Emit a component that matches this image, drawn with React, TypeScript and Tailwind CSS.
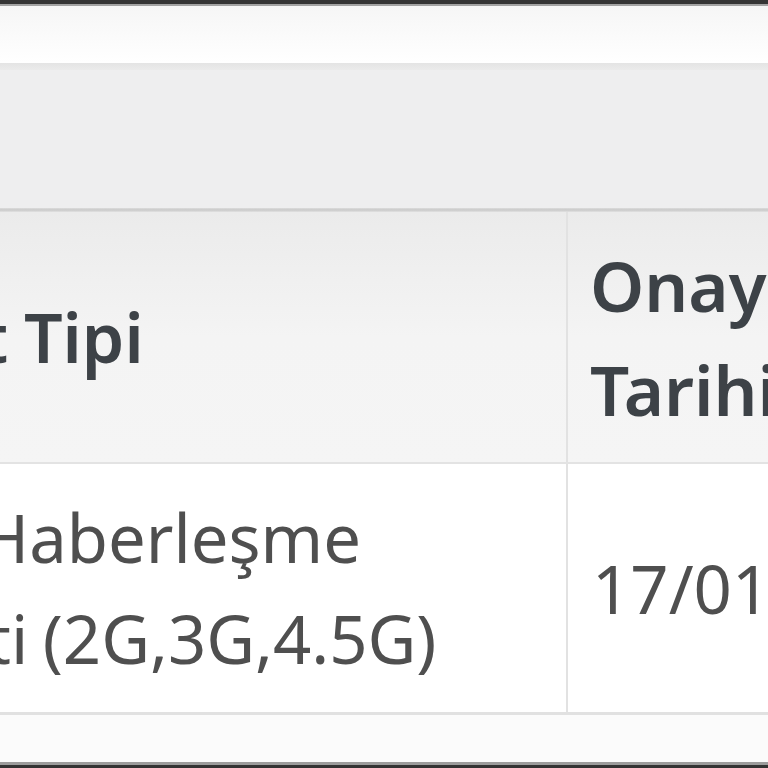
const font = { fontFamily: '"Noto Sans", "Open Sans", sans-serif' };

const App = () => {
    return (
        <div
            className="flex h-[768px] w-[768px] flex-col overflow-hidden bg-white"
            style={font}
        >
            <div className="h-[4px] shrink-0 bg-[#353535]" />
            <div className="h-[2px] shrink-0 bg-[#a3a3a3]" />
            <div className="h-[57px] shrink-0 bg-gradient-to-b from-[#f6f6f6] to-white" />
            <div className="h-[7px] shrink-0 bg-gradient-to-b from-[#e4e4e4] to-[#ebebeb]" />
            <div className="h-[138px] shrink-0 bg-[#eeeeef]" />
            <div className="h-[4px] shrink-0 bg-gradient-to-b from-[#dcdcdc] via-[#c9c9c9] to-[#e2e2e2]" />

            {/* header row */}
            <div className="flex h-[250px] shrink-0 -ml-[250px] bg-gradient-to-b from-[#ebebeb] via-[#f4f4f4] to-[#f5f5f5]">
                <div className="flex w-[818px] shrink-0 items-center border-r-2 border-[#e2e2e2] pl-[22px] text-[68px] leading-[104px] font-semibold text-[#3d4247] [word-spacing:-2px]">
                    Hizmet Tipi
                </div>
                <div className="flex w-[330px] shrink-0 items-center pl-[22px] text-[69px] leading-[104px] font-semibold text-[#3d4247]">
                    Onay Tarihi
                </div>
            </div>
            <div className="h-[2px] shrink-0 bg-[#e3e3e3]" />

            {/* body row */}
            <div className="flex h-[248px] shrink-0 -ml-[234px] bg-white">
                <div className="flex w-[802px] shrink-0 items-center border-r-2 border-[#e2e2e2] pl-[22px] text-[67px] leading-[101px] text-[#4f4f4f] [word-spacing:-3px]">
                    Mobil Haberleşme Hizmeti (2G,3G,4.5G)
                </div>
                <div className="flex w-[330px] shrink-0 items-center whitespace-nowrap pl-[24px] text-[67px] leading-[101px] text-[#4f4f4f]">
                    17/01/2020
                </div>
            </div>
            <div className="h-[3px] shrink-0 bg-[#e1e1e1]" />

            <div className="h-[47px] shrink-0 bg-[#fbfbfb]" />
            <div className="h-[3px] shrink-0 bg-[#9c9c9c]" />
            <div className="h-[3px] shrink-0 bg-[#333333]" />
        </div>
    );
};

export default App;
